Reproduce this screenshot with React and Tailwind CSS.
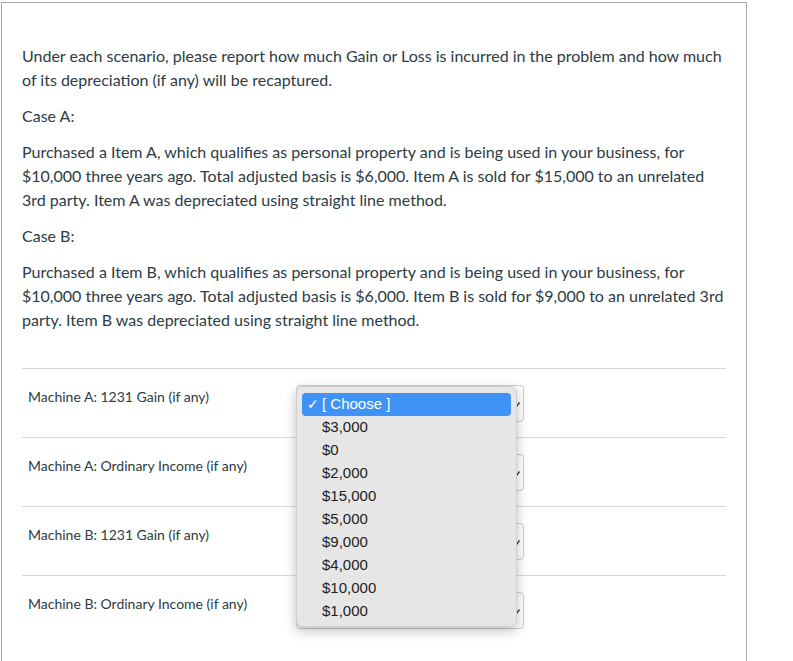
const rows = [
  'Machine A: 1231 Gain (if any)',
  'Machine A: Ordinary Income (if any)',
  'Machine B: 1231 Gain (if any)',
  'Machine B: Ordinary Income (if any)',
];

const options = ['$3,000', '$0', '$2,000', '$15,000', '$5,000', '$9,000', '$4,000', '$10,000', '$1,000'];

function Arrow() {
  return (
    <svg width="4" height="5" viewBox="0 0 4 5" className="absolute right-[3px] top-[16px]">
      <path d="M0.5 4.5 L3.5 0.5" stroke="#2d3b45" strokeWidth="1.4" />
    </svg>
  );
}

export default function App() {
  return (
    <div className="w-[793px] h-[661px] bg-white overflow-hidden font-['Lato',sans-serif] text-[#2d3b45]">
      <div className="ml-[1px] mt-[2px] w-[746px] h-[700px] border-l border-t border-r border-[#a7a7a7] pl-[20px] pr-[20px] pt-[41px]">
        <div className="text-[16px] leading-[24px] space-y-[12px]">
          <p>
            Under each scenario, please report how much Gain or Loss is incurred in the problem and how much
            of its depreciation (if any) will be recaptured.
          </p>
          <p>Case A:</p>
          <p>
            Purchased a Item A, which qualifies as personal property and is being used in your business, for
            $10,000 three years ago. Total adjusted basis is $6,000. Item A is sold for $15,000 to an unrelated
            3rd party. Item A was depreciated using straight line method.
          </p>
          <p>Case B:</p>
          <p>
            Purchased a Item B, which qualifies as personal property and is being used in your business, for
            $10,000 three years ago. Total adjusted basis is $6,000. Item B is sold for $9,000 to an unrelated 3rd
            party. Item B was depreciated using straight line method.
          </p>
        </div>

        <div className="relative mt-[36px]">
          {rows.map((label) => (
            <div key={label} className="flex h-[69px] border-t border-[#d7dadd]">
              <div className="w-[274px] pl-[6px] pt-[19px] text-[14px] leading-[17px]">{label}</div>
              <div className="relative mt-[16px] w-[228px] h-[37px] rounded-[4px] border border-[#c7cdd1] bg-white">
                <Arrow />
              </div>
            </div>
          ))}

          {/* open select menu */}
          <div className="absolute left-[274px] top-[18px] w-[221px] h-[241px] rounded-[6px] border border-[#cfcfcf] bg-[#e6e6e6] px-[5px] pt-[6px] shadow-[0_4px_12px_rgba(0,0,0,0.25)] font-['Liberation_Sans',sans-serif] text-[15px] text-[#222]">
            <div className="flex items-center h-[23px] rounded-[4px] bg-[#3f93f7] text-white">
              <span className="w-[20px] pl-[5px] text-[14px]">✓</span>
              <span>[ Choose ]</span>
            </div>
            {options.map((o) => (
              <div key={o} className="flex items-center h-[23px] pl-[20px]">
                {o}
              </div>
            ))}
          </div>
        </div>
      </div>
    </div>
  );
}
